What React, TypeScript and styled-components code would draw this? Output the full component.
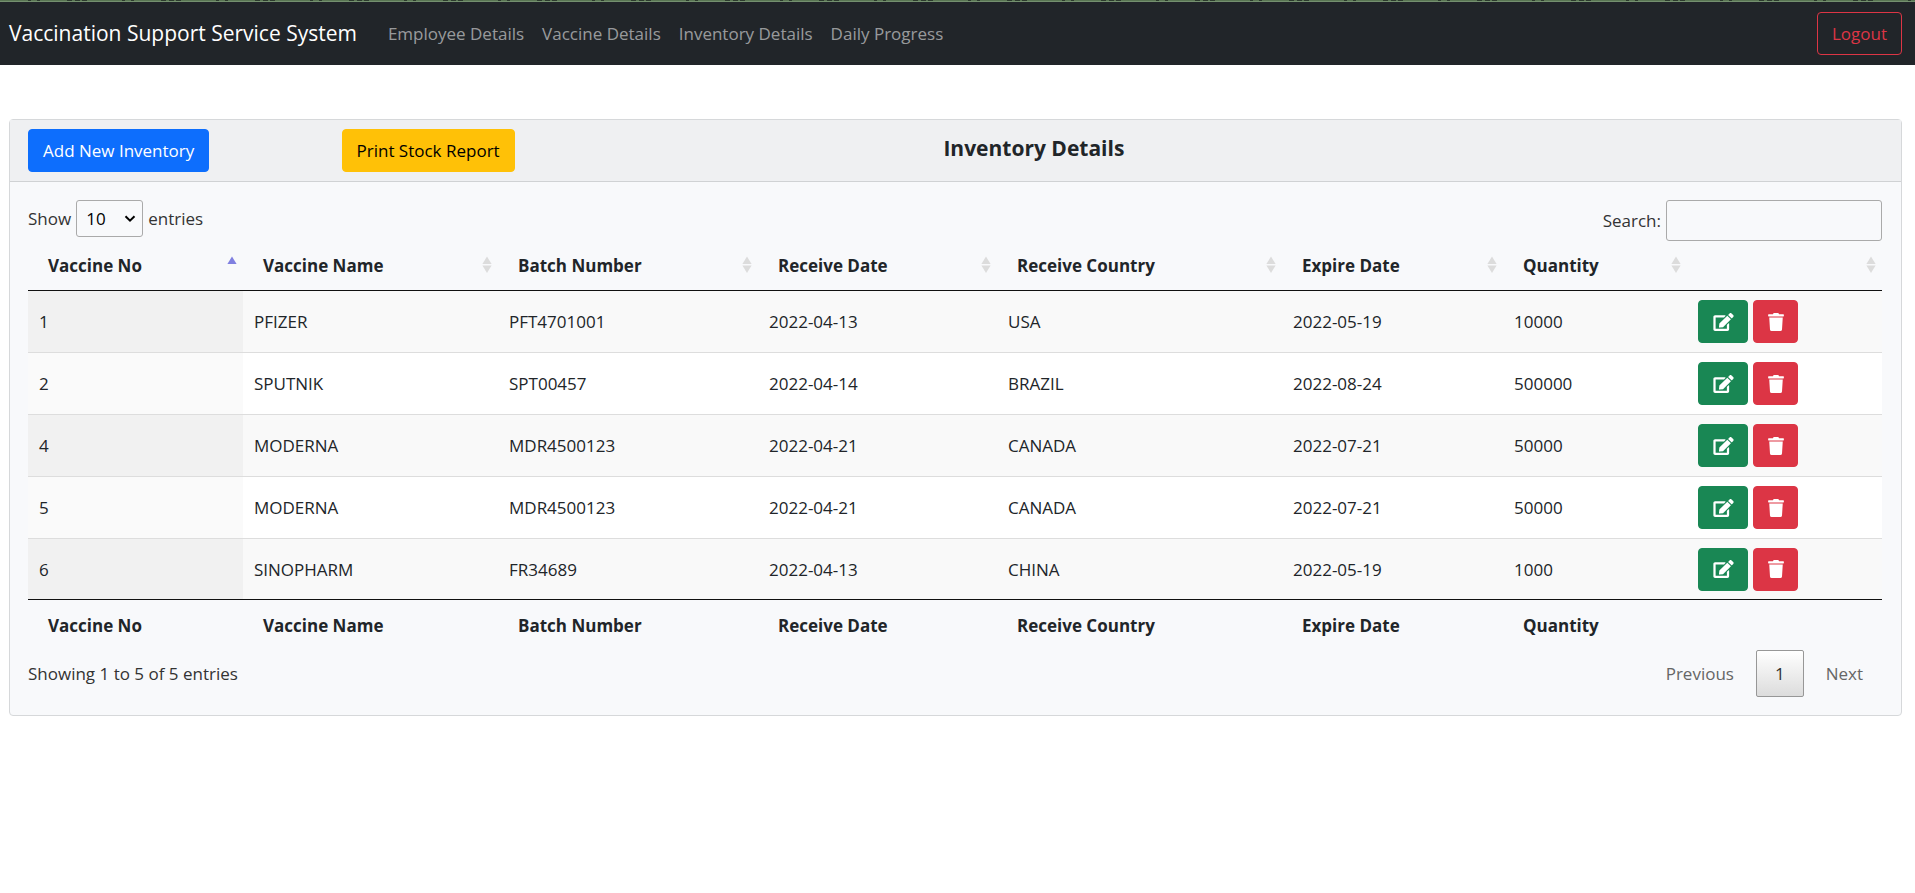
import React from "react";
import styled, { createGlobalStyle } from "styled-components";
import { FaEdit, FaTrash } from "react-icons/fa";

const GlobalStyle = createGlobalStyle`
  *, *::before, *::after { box-sizing: border-box; }
  body {
    margin: 0;
    background: #fff;
    color: #212529;
    font-family: "Open Sans", "Noto Sans", sans-serif;
    font-size: 17px;
    line-height: 27px;
  }
  button, input, select { font: inherit; }
`;

const TopStrip = styled.div`
  height: 2px;
  border-bottom: 1px solid #74906f;
  background: repeating-linear-gradient(
    90deg,
    #587552 0 28px,
    #2b3a2c 28px 31px,
    #587552 31px 37px,
    #2b3a2c 37px 40px,
    #587552 40px 67px,
    #2b3a2c 67px 72px,
    #587552 72px 75px,
    #2b3a2c 75px 80px,
    #587552 80px 82px,
    #2b3a2c 82px 87px,
    #587552 87px 94px
  );
`;

const Navbar = styled.nav`
  display: flex;
  align-items: center;
  padding: 10px 13px 10px 9px;
  background: #212529;
`;

const Brand = styled.a`
  margin-right: 22px;
  color: #fff;
  font-size: 21px;
  text-decoration: none;
  white-space: nowrap;
`;

const NavLinks = styled.ul`
  display: flex;
  flex: 1;
  margin: 0;
  padding: 0;
  list-style: none;
`;

const NavLink = styled.a`
  display: block;
  padding: 0 9px;
  color: rgba(255, 255, 255, 0.55);
  text-decoration: none;
  white-space: nowrap;
`;

const variants = {
  primary: { fill: "#0d6efd", border: "#0d6efd", text: "#fff" },
  warning: { fill: "#ffc107", border: "#ffc107", text: "#000" },
  success: { fill: "#198754", border: "#198754", text: "#fff" },
  danger: { fill: "#dc3545", border: "#dc3545", text: "#fff" },
  outlineDanger: { fill: "transparent", border: "#dc3545", text: "#dc3545" },
};

const Button = styled.button<{ $variant: keyof typeof variants }>`
  display: inline-flex;
  align-items: center;
  height: 43px;
  padding: 0 14px;
  border: 1px solid ${(p) => variants[p.$variant].border};
  border-radius: 4px;
  background: ${(p) => variants[p.$variant].fill};
  color: ${(p) => variants[p.$variant].text};
  white-space: nowrap;
  cursor: pointer;
`;

const IconButton = styled(Button)<{ $width: number }>`
  justify-content: center;
  width: ${(p) => p.$width}px;
  padding: 0;

  svg { flex: none; height: 18px; width: ${(p) => p.$width - 29}px; }
`;

const Card = styled.section`
  margin: 54px 13px 0 9px;
  border: 1px solid #d6d8da;
  border-radius: 4px;
  background: #f8f9fb;
`;

const CardHeader = styled.header`
  display: grid;
  grid-template-columns: 2fr 2fr 5fr 3fr;
  padding: 9px 5px;
  border-bottom: 1px solid #d0d2d4;
  background: #eff0f2;
`;

const HeaderCell = styled.div`
  padding: 0 13px;
`;

const Title = styled.h1`
  margin: 6px 0 0;
  font-size: 21px;
  font-weight: 700;
  line-height: 27px;
  text-align: center;
`;

const CardBody = styled.div`
  padding: 18px 19px 18px 18px;
`;

const Controls = styled.div`
  display: flex;
  justify-content: space-between;
  align-items: flex-start;
  color: #333;
`;

const ControlLabel = styled.label`
  display: flex;
  align-items: center;
  gap: 5px;
`;

const SelectWrap = styled.span`
  display: grid;
  align-items: center;

  > * { grid-area: 1 / 1; }
  svg { justify-self: end; margin-right: 7px; pointer-events: none; }
`;

const LengthSelect = styled.select`
  appearance: none;
  width: 67px;
  height: 37px;
  padding: 4px 9px;
  border: 1px solid #aaa;
  border-radius: 3px;
  background: transparent;
  color: #000;
`;

const SearchInput = styled.input`
  width: 216px;
  height: 41px;
  padding: 5px;
  border: 1px solid #aaa;
  border-radius: 3px;
  background: transparent;
`;

const Table = styled.table`
  width: 100%;
  table-layout: fixed;
  border-collapse: separate;
  border-spacing: 0;
`;

const HeadCell = styled.th`
  padding: 11px 11px 11px 20px;
  border-bottom: 1px solid #111;
  text-align: left;
  font-weight: 700;
`;

const HeadContent = styled.div`
  display: flex;
  justify-content: space-between;
  align-items: center;
  height: 27px;
`;

const SortButton = styled.button`
  display: flex;
  padding: 0 0 2px;
  margin-right: -5px;
  border: 0;
  background: none;
  cursor: pointer;
`;

const FootCell = styled.th`
  padding: 12px 20px 7px;
  border-top: 1px solid #111;
  text-align: left;
  font-weight: 700;
`;

const BodyCell = styled.td`
  height: 62px;
  padding: 0 11px;
`;

const BodyRow = styled.tr`
  background: #fff;
  &:nth-child(odd) { background: #f9f9f9; }
  td:first-child { background: #fafafa; }
  &:nth-child(odd) td:first-child { background: #f1f1f1; }
  & + & td { border-top: 1px solid #ddd; }
  &:first-child td, &:last-child td { height: 61px; }
`;

const Actions = styled.div`
  display: flex;
  gap: 5px;
`;

const TableFooter = styled.div`
  display: flex;
  justify-content: space-between;
  align-items: center;
  margin-top: 4px;
  color: #333;
`;

const Pager = styled.nav`
  display: flex;
  gap: 3px;
`;

const PageButton = styled.button<{ $current?: boolean }>`
  height: 47px;
  padding: 0 18px;
  border: 1px solid ${(p) => (p.$current ? "#979797" : "transparent")};
  border-radius: 2px;
  background: ${(p) => (p.$current ? "linear-gradient(#fff, #dcdcdc)" : "transparent")};
  color: ${(p) => (p.$current ? "#333" : "#666")};
`;

const columns = [
  { label: "Vaccine No", width: 215 },
  { label: "Vaccine Name", width: 255 },
  { label: "Batch Number", width: 260 },
  { label: "Receive Date", width: 239 },
  { label: "Receive Country", width: 285 },
  { label: "Expire Date", width: 221 },
  { label: "Quantity", width: 184 },
  { label: "", width: 195 },
];

const rows = [
  ["1", "PFIZER", "PFT4701001", "2022-04-13", "USA", "2022-05-19", "10000"],
  ["2", "SPUTNIK", "SPT00457", "2022-04-14", "BRAZIL", "2022-08-24", "500000"],
  ["4", "MODERNA", "MDR4500123", "2022-04-21", "CANADA", "2022-07-21", "50000"],
  ["5", "MODERNA", "MDR4500123", "2022-04-21", "CANADA", "2022-07-21", "50000"],
  ["6", "SINOPHARM", "FR34689", "2022-04-13", "CHINA", "2022-05-19", "1000"],
];

const links = ["Employee Details", "Vaccine Details", "Inventory Details", "Daily Progress"];

function SortIcon({ active }: { active: boolean }) {
  return (
    <svg width="10" height="18" viewBox="0 0 10 18" aria-hidden="true">
      <path d="M5 0.5 L9.6 8 H0.4 Z" fill={active ? "#8080e0" : "#dcdcdc"} />
      {!active && <path d="M0.4 9.5 H9.6 L5 17 Z" fill="#dcdcdc" />}
    </svg>
  );
}

export default function App() {
  return (
    <>
      <GlobalStyle />
      <TopStrip />
      <Navbar>
        <Brand href="#">Vaccination Support Service System</Brand>
        <NavLinks>
          {links.map((l) => (
            <li key={l}><NavLink href="#">{l}</NavLink></li>
          ))}
        </NavLinks>
        <Button $variant="outlineDanger">Logout</Button>
      </Navbar>
      <Card>
        <CardHeader>
          <HeaderCell><Button $variant="primary">Add New Inventory</Button></HeaderCell>
          <HeaderCell><Button $variant="warning">Print Stock Report</Button></HeaderCell>
          <HeaderCell><Title>Inventory Details</Title></HeaderCell>
        </CardHeader>
        <CardBody>
          <Controls>
            <ControlLabel>
              Show
              <SelectWrap>
                <LengthSelect defaultValue="10">
                  <option>10</option>
                  <option>25</option>
                  <option>50</option>
                  <option>100</option>
                </LengthSelect>
                <svg width="12" height="8" viewBox="0 0 12 8" aria-hidden="true">
                  <path d="M1.5 1.2 L6 5.7 L10.5 1.2" fill="none" stroke="#000" strokeWidth="2" />
                </svg>
              </SelectWrap>
              entries
            </ControlLabel>
            <ControlLabel>
              Search:
              <SearchInput type="search" />
            </ControlLabel>
          </Controls>
          <Table>
            <colgroup>
              {columns.map((c, i) => <col key={i} width={c.width} />)}
            </colgroup>
            <thead>
              <tr>
                {columns.map((c, i) => (
                  <HeadCell key={i} scope="col">
                    <HeadContent>
                      <span>{c.label}</span>
                      <SortButton aria-label={`Sort by ${c.label || "actions"}`}>
                        <SortIcon active={i === 0} />
                      </SortButton>
                    </HeadContent>
                  </HeadCell>
                ))}
              </tr>
            </thead>
            <tbody>
              {rows.map((r) => (
                <BodyRow key={r[0]}>
                  {r.map((v, i) => <BodyCell key={i}>{v}</BodyCell>)}
                  <BodyCell>
                    <Actions>
                      <IconButton $variant="success" $width={50} aria-label="Edit"><FaEdit /></IconButton>
                      <IconButton $variant="danger" $width={45} aria-label="Delete"><FaTrash /></IconButton>
                    </Actions>
                  </BodyCell>
                </BodyRow>
              ))}
            </tbody>
            <tfoot>
              <tr>
                {columns.map((c, i) => <FootCell key={i}>{c.label}</FootCell>)}
              </tr>
            </tfoot>
          </Table>
          <TableFooter>
            <span>Showing 1 to 5 of 5 entries</span>
            <Pager aria-label="Table pages">
              <PageButton>Previous</PageButton>
              <PageButton $current>1</PageButton>
              <PageButton>Next</PageButton>
            </Pager>
          </TableFooter>
        </CardBody>
      </Card>
    </>
  );
}
